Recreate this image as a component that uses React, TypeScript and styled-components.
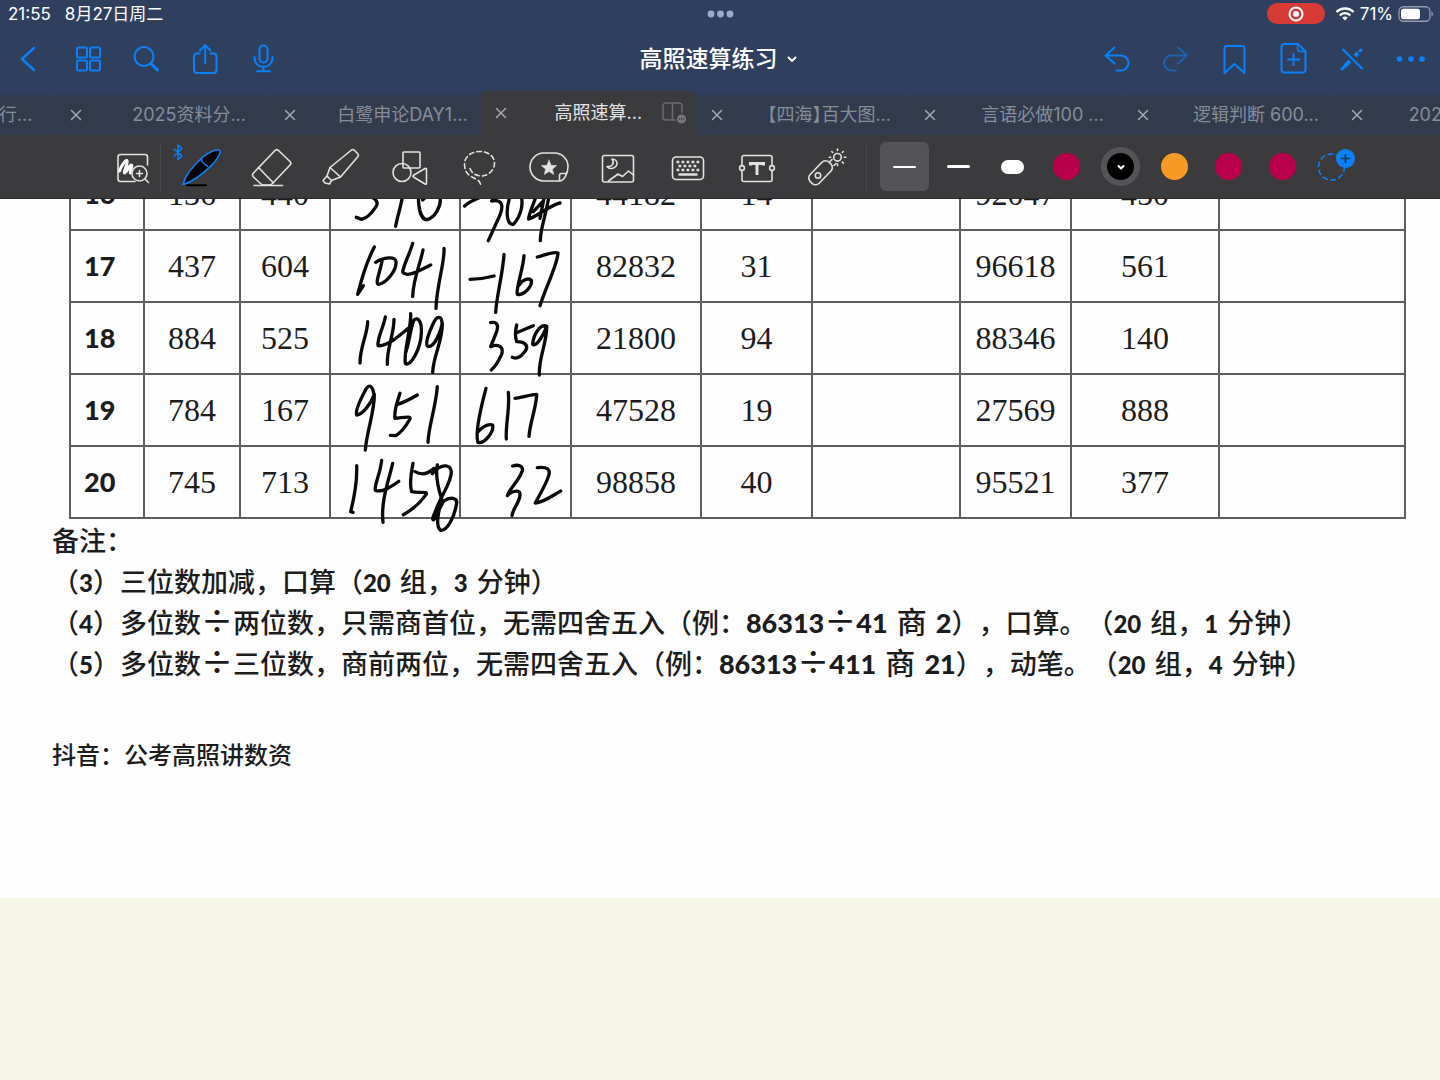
import React from "react";
import styled, { createGlobalStyle, css } from "styled-components";

const BLUE = "#0b80f8";
const BAR = "#3b3b3d";

const Global = createGlobalStyle`
  *, *::before, *::after { box-sizing: border-box; }
  body {
    margin: 0;
    background: #f6f6e6;
    font-family: Inter, "Noto Sans CJK SC", sans-serif;
  }
  button {
    font: inherit;
    color: inherit;
    background: none;
    border: 0;
    padding: 0;
    cursor: pointer;
  }
`;

const Screen = styled.div`
  display: flex;
  flex-direction: column;
  min-height: 100vh;
`;

/* ---------- header ---------- */

const Header = styled.header`
  background: #2f405f;
  color: #fff;
`;

const StatusBar = styled.div`
  display: grid;
  grid-template-columns: 1fr auto 1fr;
  align-items: center;
  height: 27px;
  padding: 0 6px 0 8px;
  font-size: 17px;
  line-height: 26px;
`;

const StatusGroup = styled.div<{ $end?: boolean }>`
  display: flex;
  align-items: center;
  gap: ${(p) => (p.$end ? 5 : 14)}px;
  justify-content: ${(p) => (p.$end ? "flex-end" : "flex-start")};
`;

const Recording = styled.span`
  display: flex;
  align-items: center;
  justify-content: center;
  width: 58px;
  height: 21px;
  margin-right: 5px;
  border-radius: 11px;
  background: #d83b35;
`;

const NavBar = styled.nav`
  display: grid;
  grid-template-columns: 1fr auto 1fr;
  align-items: center;
  height: 64px;
  padding: 0 7px 0 6px;
`;

const NavGroup = styled.div<{ $end?: boolean }>`
  display: flex;
  gap: 15px;
  justify-content: ${(p) => (p.$end ? "flex-end" : "flex-start")};
`;

const NavButton = styled.button`
  width: 44px;
  height: 44px;
  color: ${BLUE};
  &:disabled { opacity: 0.5; }
`;

const TitleButton = styled.button`
  display: flex;
  align-items: center;
  gap: 6px;
  font-size: 23px;
  font-weight: 500;
  line-height: 32px;
`;

/* ---------- tabs ---------- */

const TabViewport = styled.div`
  overflow: hidden;
`;

const TabStrip = styled.div`
  display: flex;
  align-items: flex-end;
  height: 44px;
  margin: 0 -108px 0 -159px;
`;

const Tab = styled.div<{ $active?: boolean }>`
  display: flex;
  flex: none;
  align-items: center;
  width: 12.5%;
  height: 40px;
  padding: 0 0 0 5px;
  font-size: 18px;
  color: #858d9b;
  background: #313b4d;
  border-left: 1px solid #2d3d5a;
  ${(p) =>
    p.$active &&
    css`
      height: 44px;
      padding: 0 9px 0 3px;
      color: #e4e4e6;
      background: ${BAR};
      border-left-color: ${BAR};
      border-radius: 5px 5px 0 0;
    `}
`;

const TabClose = styled.button`
  display: flex;
  align-items: center;
  justify-content: center;
  width: 32px;
  height: 32px;
  color: #a3a9b3;
`;

const TabTitle = styled.button<{ $align?: string }>`
  flex: 1;
  min-width: 0;
  padding: 0 ${(p) => (p.$align ? 22 : 0)}px 0 ${(p) => (p.$align ? 36 : 18)}px;
  text-align: ${(p) => p.$align || "center"};
  line-height: 28px;
  white-space: nowrap;
  font-feature-settings: "halt";
`;

/* ---------- tool bar ---------- */

const ToolBar = styled.div`
  display: flex;
  align-items: center;
  height: 64px;
  padding: 0 79px 0 108px;
  background: ${BAR};
  border-bottom: 1px solid #2b2b2d;
  color: #e2e2e3;
`;

const Tools = styled.div`
  display: flex;
  flex: 1;
  justify-content: space-between;
`;

const ToolButton = styled.button`
  width: 48px;
  height: 48px;
`;

const Divider = styled.span<{ $before: number; $after: number }>`
  width: 1px;
  height: 48px;
  margin: 0 ${(p) => p.$after}px 0 ${(p) => p.$before}px;
  background: #4b4b4e;
`;

const Palette = styled.div`
  display: flex;
  gap: 5px;
`;

const Swatch = styled.button<{ $selected?: boolean }>`
  display: flex;
  align-items: center;
  justify-content: center;
  width: 49px;
  height: 49px;
  border-radius: 6px;
  background: ${(p) => (p.$selected ? "#545358" : "none")};
`;

const Stroke = styled.span<{ $weight: number }>`
  width: 23px;
  height: ${(p) => p.$weight}px;
  border-radius: 7px;
  background: #fff;
`;

const Ink = styled.span<{ $color: string; $selected?: boolean }>`
  display: flex;
  align-items: center;
  justify-content: center;
  width: 27px;
  height: 27px;
  border-radius: 50%;
  background: ${(p) => p.$color};
  box-shadow: ${(p) => (p.$selected ? "0 0 0 6px #545358" : "none")};
`;

/* ---------- document ---------- */

const Page = styled.main`
  overflow: hidden;
  padding: 0 34px 123px 52px;
  background: #fefefe;
  color: #1c1c1c;
`;

/* The sheet is scrolled so that row 16 is half under the tool bar. */
const Sheet = styled.table`
  width: calc(100% - 17px);
  margin: -42px 0 0 17px;
  table-layout: fixed;
  border-collapse: collapse;
`;

const Cell = styled.td`
  height: 72px;
  padding: 0;
  border: 2px solid #5e5e5e;
  font: 32px/36px "Liberation Serif", serif;
  text-align: center;
`;

const IndexCell = styled.th`
  height: 72px;
  padding: 0 13px;
  border: 2px solid #5e5e5e;
  font: 900 27px/36px Lato, sans-serif;
  text-align: left;
`;

const Handwriting = styled.svg`
  display: block;
  margin: 0 auto;
  overflow: visible;
  fill: none;
  stroke: #0a0a0a;
  stroke-width: 10;
  stroke-linecap: round;
  stroke-linejoin: round;
`;

const Notes = styled.section`
  font: 500 27px/41px "Noto Sans CJK SC", sans-serif;
  text-spacing-trim: space-all;
`;

const Note = styled.p`
  margin: 0;
  height: 41px;
  white-space: nowrap;
`;

const Num = styled.b<{ $large?: boolean }>`
  font-family: Lato, sans-serif;
  font-weight: 900;
  font-size: ${(p) => (p.$large ? 27 : 24)}px;
  line-height: 1;
`;

const Unit = styled.span<{ $large?: boolean }>`
  margin-left: 3px;
  margin-right: ${(p) => (p.$large ? 3 : 0)}px;
  font-size: ${(p) => (p.$large ? 30 : 27)}px;
  line-height: 1;
`;

const Operator = styled.span`
  display: inline-block;
  width: 32px;
  font-size: 32px;
  line-height: 1;
  text-align: center;
`;

const Author = styled.p`
  margin: 50px 0 0;
  font: 500 24px/42px "Noto Sans CJK SC", sans-serif;
`;

/* ---------- icons ---------- */

type IconProps = { size?: number; width?: number; children: React.ReactNode };

const Icon = ({ size = 44, width = 2, children }: IconProps) => (
  <svg
    width={size}
    height={size}
    viewBox={`0 0 ${size} ${size}`}
    fill="none"
    stroke="currentColor"
    strokeWidth={width}
    strokeLinecap="round"
    strokeLinejoin="round"
    overflow="visible"
    display="block"
    aria-hidden="true"
  >
    {children}
  </svg>
);

const leftNav = [
  { name: "返回", art: <path d="M28 11 16 22l12 11" strokeWidth={2.4} /> },
  {
    name: "缩略图",
    art: (
      <>
        <rect x="12" y="10.5" width="10" height="10" rx="1.5" />
        <rect x="25" y="10.5" width="10" height="10" rx="1.5" />
        <rect x="12" y="23.5" width="10" height="10" rx="1.5" />
        <rect x="25" y="23.5" width="10" height="10" rx="1.5" />
      </>
    ),
  },
  {
    name: "搜索",
    art: (
      <>
        <circle cx="20" cy="19.5" r="9.5" />
        <path d="m27.5 27 6 6" strokeWidth={3} />
      </>
    ),
  },
  {
    name: "分享",
    art: (
      <>
        <path d="M17 16.5h-3a3 3 0 0 0-3 3V33a3 3 0 0 0 3 3h16.5a3 3 0 0 0 3-3V19.5a3 3 0 0 0-3-3h-3" />
        <path d="M22.2 26V8.5M17 13.5l5.2-5.2 5.2 5.2" />
      </>
    ),
  },
  {
    name: "录音",
    art: (
      <>
        <rect x="17.5" y="8.5" width="8" height="17" rx="4" />
        <path d="M12.5 20v1a9 9 0 0 0 18 0v-1M21.5 30v4M15 34.3h13" />
      </>
    ),
  },
];

const rightNav = [
  { name: "撤销", art: <path d="M20.5 10.5 11.5 18.5l9 8M12 18.5h15a7.5 7.5 0 0 1 0 15h-4.5" /> },
  {
    name: "重做",
    disabled: true,
    art: <path d="M25 10.5 34 18.5l-9 8M33.5 18.5h-15a7.5 7.5 0 0 0 0 15H23" />,
  },
  { name: "书签", art: <path d="M12.5 36V11a2 2 0 0 1 2-2h16a2 2 0 0 1 2 2v25l-10-9z" /> },
  {
    name: "添加页面",
    art: (
      <>
        <path d="M27 7H13.5a3 3 0 0 0-3 3v22.5a3 3 0 0 0 3 3h18a3 3 0 0 0 3-3V14.5z" />
        <path d="M26.5 7v4.5a3 3 0 0 0 3 3h5" strokeWidth={1.5} />
        <path d="M22.5 17v11M17 22.5h11" />
      </>
    ),
  },
  {
    name: "关闭书写",
    art: (
      <>
        <path d="M13 12.5 32 31.500" />
        <path d="m15 29 5-5M25 19l3-3" strokeWidth={4} strokeLinecap="butt" />
        <path d="m12 32 3.5-3.5M30 14l1-1" strokeWidth={3} />
      </>
    ),
  },
  {
    name: "更多",
    art: (
      <g fill="currentColor" stroke="none">
        <circle cx="10.5" cy="22" r="2.800" />
        <circle cx="22" cy="22" r="2.800" />
        <circle cx="33" cy="22" r="2.800" />
      </g>
    ),
  },
];

const zoomArt = (
  <>
    <path d="M39.5 22v-8a2.5 2.5 0 0 0-2.5-2.5H12.5A2.5 2.5 0 0 0 10 14v22a2.5 2.5 0 0 0 2.5 2.5H27" />
    <path d="M11.5 28c2-6 6-11 7.5-10.500 2 1-4 12-2.500 12.500s5-9 7-8-2.500 6-1 8" strokeWidth={3} stroke="#fff" />
    <circle cx="31.5" cy="30.5" r="7.5" fill={BAR} />
    <path d="M31.5 27.5v6M28.5 30.5h6M37 36l3.5 3.5" />
  </>
);

const tools = [
  {
    name: "钢笔",
    art: (
      <>
        <path d="M10 42.3h19" stroke="#000" strokeWidth={2} />
        <path
          d="M6 41.5C8 33 17 22 26 14 33 8 41.5 5.500 43 7.300c1 2-2.500 9.200-8.500 15C26.500 30 15.500 39 6 41.500z"
          fill="#000"
          stroke={BLUE}
        />
        <path d="M24.5 16c.5 3.500 2.500 5.500 6 7" stroke={BLUE} />
        <path d="M-3 6 5 13 1 16.500V2L5 5.500-3 13" stroke={BLUE} strokeWidth={1.5} />
      </>
    ),
  },
  {
    name: "橡皮擦",
    art: (
      <>
        <path d="M28 7.5a2.5 2.5 0 0 1 3.5 0l11.5 11a2.5 2.5 0 0 1 0 3.500L25.500 40.500q-1.500 1.500-3.500 1.500h-5q-2 0-3.500-1.500L6.500 34q-2-2 0-4z" />
        <path d="m11.5 24.5 14.5 15M7 42.500h28.500" />
      </>
    ),
  },
  {
    name: "荧光笔",
    art: (
      <>
        <path d="M14 24.5 35.500 7q1.500-1 2.800.2l3.500 3.600q1.200 1.300.2 2.800L24.500 34z" />
        <path d="M14 24.5 11 33l4.500 4.500 9-3.500M11 33l-4 4.500 2 2.500 4.500 1 2-3.500" />
      </>
    ),
  },
  {
    name: "形状",
    art: (
      <>
        <rect x="17" y="9" width="17" height="16" rx="1" />
        <circle cx="16" cy="29.5" r="9" />
        <path d="M27.5 32.3 39 25.500q1.500-.8 1.500 1v13.500q0 1.800-1.500 1L27.500 34q-1.300-.8 0-1.700z" fill={BAR} />
      </>
    ),
  },
  {
    name: "套索",
    art: (
      <path
        d="M15 25.5C17 31 22 33 27 33c8-1 12.500-7 12.500-12.500C39.500 13 33 8.500 24.500 8.500S9.500 14 9.500 21c0 10 6 12 10.500 14.500 4 2 5 3.500 5.700 6.500"
        strokeDasharray="4.5 3.2"
      />
    ),
  },
  {
    name: "贴纸",
    art: (
      <>
        <path d="M34.5 38H18.500a14 14 0 0 1-13.500-14.200A14 14 0 0 1 18.500 10h11A13.500 13.500 0 0 1 43 23.500c0 7-4 14.500-8.500 14.500zM34.500 38v-5.500a2 2 0 0 1 2-2h5" />
        <path
          d="m24 17 2.1 5.2 5.6.4-4.3 3.6 1.4 5.4-4.8-3-4.8 3 1.4-5.4-4.3-3.6 5.6-.4z"
          fill="currentColor"
          strokeWidth={0.5}
        />
      </>
    ),
  },
  {
    name: "图片",
    art: (
      <>
        <rect x="8.5" y="12.5" width="31" height="26.5" rx="2" />
        <path d="M18 16c3 4 0 8.500-5 7.500 2.500 3.500 9.500 2 10-3 0-2.500-2-4.500-5-4.500zM14.500 38l9.500-7 4.500 2.500 6-5.500 5 4" />
      </>
    ),
  },
  {
    name: "键盘",
    art: (
      <>
        <rect x="8.5" y="14" width="31" height="22.5" rx="3.5" />
        <path d="M12.5 19h23M14.500 23h20M12.500 27h23" strokeWidth={2.6} strokeDasharray="2.8 2.2" strokeLinecap="butt" />
        <path d="M15.5 31.500h17" strokeWidth={2.4} />
      </>
    ),
  },
  {
    name: "文本",
    art: (
      <>
        <path d="M9 22v-7.500a2 2 0 0 1 2-2h26a2 2 0 0 1 2 2V22M9 28v8.500a2 2 0 0 0 2 2h26a2 2 0 0 0 2-2V28" />
        <circle cx="9" cy="25" r="2.4" />
        <circle cx="39" cy="25" r="2.4" />
        <path d="M17.5 22.500V20.500h13v2M24 20.500V32" strokeWidth={3} strokeLinecap="butt" strokeLinejoin="miter" />
      </>
    ),
  },
  {
    name: "激光笔",
    art: (
      <>
        <rect x="4" y="23.5" width="27" height="12.5" rx="5" transform="rotate(-46 17.5 29.7)" />
        <circle cx="15" cy="32.5" r="2.7" />
        <path d="m27 18.5 2-2M31 22.500l2-2" />
        <circle cx="34.5" cy="14.3" r="3.8" />
        <path d="M34.5 7.500v-1.500M34.500 22.600v-1.500M41.300 14.300h1.500M26.200 14.300h1.500M39.300 9.500l1-1M39.300 19.100l1 1M29.700 9.500l-1-1" />
      </>
    ),
  },
];

const tabs = [
  { title: "行...", align: "right" },
  { title: "2025资料分..." },
  { title: "白鹭申论DAY1..." },
  { title: "高照速算...", active: true },
  { title: "【四海】百大图..." },
  { title: "言语必做100 ..." },
  { title: "逻辑判断 600..." },
  { title: "202", align: "left" },
];

/* ---------- exercise data ---------- */

const columns = [74, 96, 90, 130, 111, 130, 111, 148, 111, 148, 186];

type Row = {
  n: number;
  a: number;
  b: number;
  sum: string;
  diff: string;
  c: number;
  d: number;
  e: number;
  f: number;
  sumInk: string;
  diffInk: string;
};

/* Pen strokes share one sheet-wide grid; each row is 216 units tall. */
const rows: Row[] = [
  {
    n: 16, a: 136, b: 440, sum: "576", diff: "-304", c: 44182, d: 14, e: 92047, f: 450,
    sumInk: "M150-60 130 0C165 5 178 20 168 35 155 55 140 70 125 73L109 67M190-40 255-50C250 20 232 60 227 94M310-60C285 0 295 75 322 74 345 68 362 35 361 12 350-5 320 0 308 15",
    diffInk: "M434 33C450 18 470 10 495 2M500-20C540-20 530 0 515 18 545 12 552 30 540 60L505 137M575-10C555 40 558 92 580 88 606 60 612 20 600-5 595-15 585-15 575-10M655-15C640 30 625 60 626 72 660 60 690 30 720 24M640 50 668 20M690-20C685 40 660 100 661 137M672 10C668 30 664 50 660 70",
  },
  {
    n: 17, a: 437, b: 604, sum: "1041", diff: "-167", c: 82832, d: 31, e: 96618, f: 561,
    sumInk: "M163 156C145 190 125 250 113 298L130 272M187 195C180 230 165 265 175 268 200 265 230 225 228 200 226 183 190 186 167 202M278 145C268 180 250 210 248 232 262 250 300 225 332 210M309 165C300 210 280 250 278 304M372 160C375 200 350 270 348 340",
    diffInk: "M450 253Q485 253 522 243M552 178C548 240 530 300 527 352M612 182C610 220 586 285 592 298 610 302 638 275 634 256 628 248 608 252 596 272M652 186C675 180 700 168 714 174 712 210 680 270 660 332",
  },
  {
    n: 18, a: 884, b: 525, sum: "1409", diff: "359", c: 21800, d: 94, e: 88346, f: 140,
    sumInk: "M143 380C142 420 120 455 120 504M196 366C190 400 172 425 174 452 200 455 235 425 270 395M222 373C222 420 200 460 202 508M272 356C274 400 250 470 256 505 272 518 302 460 304 415 306 385 296 362 281 376 272 400 268 440 258 470M366 385C366 360 350 362 340 385 328 410 312 450 325 455 345 455 362 410 367 385 368 440 340 480 338 532",
    diffInk: "M512 383C535 378 536 395 528 415L512 455C535 445 552 455 545 478 535 500 525 515 514 525M590 390C585 410 585 425 590 440 618 440 630 455 610 475 600 488 588 492 577 487M593 412 640 392M680 394C660 385 640 420 638 448 648 458 672 420 680 394 682 440 655 490 658 540",
  },
  {
    n: 19, a: 784, b: 167, sum: "951", diff: "617", c: 47528, d: 19, e: 27569, f: 888,
    sumInk: "M162 600C158 572 148 566 138 582 122 612 104 648 110 660 128 658 152 628 163 598 164 650 140 710 136 765M240 595C228 630 222 655 225 670 250 668 275 662 270 672 255 698 240 715 227 722L211 721M232 628C255 622 275 610 292 600M352 575C347 640 326 690 324 742",
    diffInk: "M498 580C482 640 464 715 474 742 492 748 522 712 518 690 505 686 488 695 472 712M565 592C570 640 556 690 559 732M585 610C610 606 635 598 650 598 650 635 630 680 627 724",
  },
  {
    n: 20, a: 745, b: 713, sum: "1458", diff: "32", c: 98858, d: 40, e: 95521, f: 377,
    sumInk: "M110 812C112 860 102 910 92 950L99 952M185 796C180 840 162 870 166 886 188 894 215 874 236 859M218 805C205 860 182 920 189 982M279 805C270 850 270 875 275 890 300 896 325 886 318 899 300 925 270 948 250 959M285 830C305 842 325 836 342 820M337 836C360 808 392 804 394 830 394 862 366 898 352 935 344 955 332 978 342 974 355 955 362 928 372 918 390 905 412 908 410 924 404 965 382 1008 362 1006 346 996 354 950 366 915 358 890 344 850 352 810M344 970 366 915",
    diffInk: "M578 813C602 806 612 818 605 832 595 858 568 882 562 902 580 884 602 884 600 900 598 925 578 940 576 962M652 818C682 814 692 824 686 842 678 870 655 905 646 924 672 922 700 900 722 888",
  },
];

type WrittenProps = { left: number; width: number; row: number; label: string; d: string };

const Written = ({ left, width, row, label, d }: WrittenProps) => (
  <Handwriting
    role="img"
    aria-label={label}
    width={width}
    height={70}
    viewBox={`${left} ${row * 216 - 108} ${width * 3} 210`}
  >
    <path d={d} />
  </Handwriting>
);

type LongNoteProps = { n: number; divisor: string; rule: string; by: number; quotient: number; how: string; minutes: number };

const LongNote = ({ n, divisor, rule, by, quotient, how, minutes }: LongNoteProps) => (
  <Note>
    （<Num>{n}</Num>）多位数<Operator>÷</Operator>
    {divisor}位数，{rule}，无需四舍五入（例：<Num $large>86313</Num>
    <Operator>÷</Operator>
    <Num $large>{by}</Num> <Unit $large>商</Unit> <Num $large>{quotient}</Num>），{how}。（<Num>20</Num>{" "}
    <Unit>组</Unit>，<Num>{minutes}</Num> <Unit>分钟</Unit>）
  </Note>
);

export default function App() {
  return (
    <Screen>
      <Global />
      <Header>
        <StatusBar>
          <StatusGroup>
            <span>21:55</span>
            <span>8月27日周二</span>
          </StatusGroup>
          <svg width="28" height="8" fill="#9babce" aria-hidden="true">
            <circle cx="4" cy="4" r="3.4" />
            <circle cx="13.5" cy="4" r="3.4" />
            <circle cx="23" cy="4" r="3.4" />
          </svg>
          <StatusGroup $end>
            <Recording>
              <svg width="16" height="16" fill="none" stroke="#fff" strokeWidth="2" aria-hidden="true">
                <circle cx="8" cy="8" r="6.5" />
                <circle cx="8" cy="8" r="3" fill="#fff" stroke="none" />
              </svg>
            </Recording>
            <svg width="20" height="14" viewBox="0 0 20 14" fill="none" stroke="#fff" strokeWidth="2.4" aria-hidden="true">
              <path d="M1.5 5a12 12 0 0 1 17 0M4.700 8.300a7.500 7.500 0 0 1 10.600 0" />
              <path d="M10 13.5 7.300 10.800a3.800 3.800 0 0 1 5.400 0z" fill="#fff" stroke="none" />
            </svg>
            <span>71%</span>
            <svg width="36" height="16" viewBox="0 0 36 16" aria-hidden="true">
              <rect x="1" y="0.75" width="31" height="14.5" rx="4.5" fill="none" stroke="#8f9aae" strokeWidth="1.3" />
              <rect x="3" y="2.75" width="19" height="10.5" rx="2.5" fill="#fff" />
              <path d="M33.5 5.500c2 1 2 4 0 5z" fill="#8f9aae" />
            </svg>
          </StatusGroup>
        </StatusBar>

        <NavBar>
          <NavGroup>
            {leftNav.map((i) => (
              <NavButton key={i.name} aria-label={i.name}>
                <Icon>{i.art}</Icon>
              </NavButton>
            ))}
          </NavGroup>
          <TitleButton>
            高照速算练习
            <Icon size={16}>
              <path d="m4.5 6.500 3.500 3.500 3.500-3.500" />
            </Icon>
          </TitleButton>
          <NavGroup $end>
            {rightNav.map((i) => (
              <NavButton key={i.name} aria-label={i.name} disabled={i.disabled}>
                <Icon>{i.art}</Icon>
              </NavButton>
            ))}
          </NavGroup>
        </NavBar>

        <TabViewport>
          <TabStrip>
            {tabs.map((t) => (
              <Tab key={t.title} $active={t.active}>
                <TabClose aria-label="关闭标签页">
                  <Icon size={10} width={1.5}>
                    <path d="m.5.5 9 9M9.500.5l-9 9" />
                  </Icon>
                </TabClose>
                <TabTitle $align={t.align}>{t.title}</TabTitle>
                {t.active && (
                  <svg width="24" height="22" fill="none" stroke="#6b6b6e" strokeWidth="1.5" aria-hidden="true">
                    <path d="M14 18H4a3 3 0 0 1-3-3V4a3 3 0 0 1 3-3h13a3 3 0 0 1 3 3v7M10.500 1v17" />
                    <circle cx="19.5" cy="17" r="4.5" fill="#77777a" stroke="none" />
                    <path d="M17 17h5" stroke={BAR} strokeDasharray="1 1" />
                  </svg>
                )}
              </Tab>
            ))}
          </TabStrip>
        </TabViewport>
      </Header>

      <ToolBar>
        <ToolButton aria-label="缩放窗口">
          <Icon size={48} width={1.6}>{zoomArt}</Icon>
        </ToolButton>
        <Divider $before={4} $after={16} />
        <Tools>
          {tools.map((t) => (
            <ToolButton key={t.name} aria-label={t.name}>
              <Icon size={48} width={1.6}>{t.art}</Icon>
            </ToolButton>
          ))}
        </Tools>
        <Divider $before={15} $after={13} />
        <Palette>
          <Swatch $selected aria-label="细线"><Stroke $weight={2} /></Swatch>
          <Swatch aria-label="中线"><Stroke $weight={3} /></Swatch>
          <Swatch aria-label="粗线"><Stroke $weight={14} /></Swatch>
          <Swatch aria-label="玫红"><Ink $color="#ba004b" /></Swatch>
          <Swatch aria-label="黑色">
            <Ink $color="#000" $selected>
              <Icon size={8}><path d="m1.5 3 2.500 2.500L6.500 3" stroke="#fff" /></Icon>
            </Ink>
          </Swatch>
          <Swatch aria-label="橙色"><Ink $color="#f59b25" /></Swatch>
          <Swatch aria-label="玫红 2"><Ink $color="#ba004b" /></Swatch>
          <Swatch aria-label="玫红 3"><Ink $color="#ba004b" /></Swatch>
          <Swatch aria-label="添加颜色">
            <Icon size={48} width={1.5}>
              <circle cx="18.5" cy="24" r="13" stroke={BLUE} strokeDasharray="4.5 3.7" />
              <circle cx="32.5" cy="15.5" r="9.5" fill={BLUE} stroke="none" />
              <path d="M32.5 11.500v8M28.500 15.500h8" stroke="#20364f" />
            </Icon>
          </Swatch>
        </Palette>
      </ToolBar>

      <Page>
        <Sheet>
          <colgroup>
            {columns.map((w, i) => (
              <col key={i} style={{ width: `${(w / 1335) * 100}%` }} />
            ))}
          </colgroup>
          <tbody>
            {rows.map((r, i) => (
              <tr key={r.n}>
                <IndexCell scope="row">{r.n}</IndexCell>
                <Cell>{r.a}</Cell>
                <Cell>{r.b}</Cell>
                <Cell><Written left={33} width={128} row={i} label={r.sum} d={r.sumInk} /></Cell>
                <Cell><Written left={423} width={109} row={i} label={r.diff} d={r.diffInk} /></Cell>
                <Cell>{r.c}</Cell>
                <Cell>{r.d}</Cell>
                <Cell />
                <Cell>{r.e}</Cell>
                <Cell>{r.f}</Cell>
                <Cell />
              </tr>
            ))}
          </tbody>
        </Sheet>

        <Notes>
          <Note>备注：</Note>
          <Note>
            （<Num>3</Num>）三位数加减，口算（<Num>20</Num> <Unit>组</Unit>，<Num>3</Num> <Unit>分钟</Unit>）
          </Note>
          <LongNote n={4} divisor="两" rule="只需商首位" by={41} quotient={2} how="口算" minutes={1} />
          <LongNote n={5} divisor="三" rule="商前两位" by={411} quotient={21} how="动笔" minutes={4} />
        </Notes>
        <Author>抖音：公考高照讲数资</Author>
      </Page>
    </Screen>
  );
}
